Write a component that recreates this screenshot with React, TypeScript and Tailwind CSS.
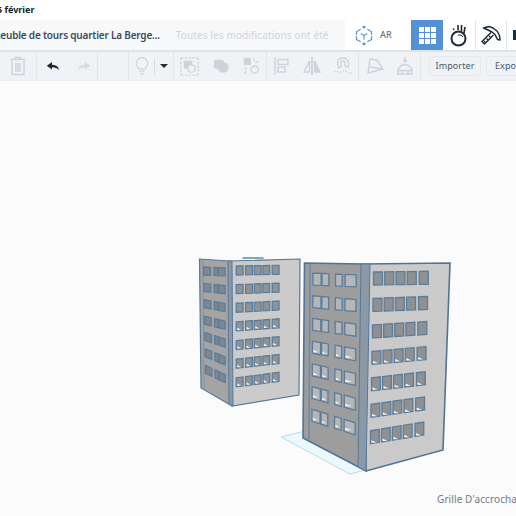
import { ReactNode } from 'react';

type Pt = [number, number];

const lerp = (a: Pt, b: Pt, t: number): Pt => [a[0] + (b[0] - a[0]) * t, a[1] + (b[1] - a[1]) * t];
const pts = (list: Pt[]) => list.map((p) => p.join(',')).join(' ');

// one storey grid of windows: corners of top row window run and bottom row run
function WindowGrid({
  spans,
  topA,
  topB,
  botA,
  botB,
  h,
  rows,
  fill,
  sliver,
}: {
  spans: [number, number][];
  topA: Pt;
  topB: Pt;
  botA: Pt;
  botB: Pt;
  h: number;
  rows: number;
  fill: string;
  sliver?: boolean;
}) {
  const items: ReactNode[] = [];
  for (let r = 0; r < rows; r++) {
    const t = r / (rows - 1);
    const a = lerp(topA, botA, t);
    const b = lerp(topB, botB, t);
    spans.forEach(([s, e], i) => {
      const p1 = lerp(a, b, s);
      const p2 = lerp(a, b, e);
      const quad: Pt[] = [p1, p2, [p2[0], p2[1] + h], [p1[0], p1[1] + h]];
      items.push(<polygon key={`${r}-${i}`} points={pts(quad)} fill={fill} stroke="#5b7d9b" strokeWidth="1.3" />);
      if (sliver && t > 0.4) {
        const sl: Pt[] = [
          [p1[0] + 1, p1[1] + h - 1],
          [p1[0] + 1, p1[1] + h - 3.5],
          [p1[0] + (p2[0] - p1[0]) * 0.7, p1[1] + h - 1],
        ];
        items.push(<polygon key={`s${r}-${i}`} points={pts(sl)} fill="#f1f3f4" />);
      }
    });
  }
  return <>{items}</>;
}

function Buildings() {
  return (
    <svg viewBox="0 81 516 435" className="absolute inset-0 h-full w-full">
      {/* workplane */}
      <polygon points="281,437 305,431 443,450 350,474" fill="#ecf8fc" stroke="#aee0f0" strokeWidth="1" />

      {/* small tower */}
      <polygon points="242,259 243,257 263,257 264,259" fill="#7fa9b3" />
      <polygon points="199.5,259 229,261 232,406 201,388" fill="#a4a4a4" stroke="#56799a" strokeWidth="1.2" />
      <polygon points="229,261 300,259 299,395 232,406" fill="#cbcbcb" stroke="#56799a" strokeWidth="1.2" />
      <polygon points="228,261 232,261 233,406 229,404" fill="#8b98a5" stroke="#56799a" strokeWidth="1" />
      <line x1="203" y1="260" x2="204" y2="388" stroke="#7e93a7" strokeWidth="1" />
      <WindowGrid
        spans={[[0.02, 0.3], [0.44, 0.6], [0.62, 0.88]]}
        topA={[203, 267]}
        topB={[228, 268]}
        botA={[205, 365]}
        botB={[228, 376]}
        h={8}
        rows={7}
        fill="#7f878e"
      />
      <WindowGrid
        spans={[[0.02, 0.13], [0.17, 0.28], [0.31, 0.42], [0.45, 0.56], [0.6, 0.71]]}
        topA={[235, 266]}
        topB={[297, 265]}
        botA={[235, 378]}
        botB={[297, 370]}
        h={9}
        rows={7}
        fill="#8f9396"
        sliver
      />

      {/* big tower */}
      <polygon points="304.5,263 363,264 366,471 303,438" fill="#9d9d9d" stroke="#4f7496" strokeWidth="1.6" />
      <polygon points="363,264 450,263 443,450 366,471" fill="#cacaca" stroke="#4f7496" strokeWidth="1.6" />
      <polygon points="361,264 370,264 366,471 358,467" fill="#8b98a5" stroke="#56799a" strokeWidth="1" />
      <line x1="310" y1="264" x2="309" y2="441" stroke="#6f8aa3" strokeWidth="1.5" />
      <WindowGrid
        spans={[[0.02, 0.19], [0.21, 0.35], [0.49, 0.63], [0.69, 0.92]]}
        topA={[312, 273]}
        topB={[360, 275]}
        botA={[311, 409]}
        botB={[359, 424]}
        h={12}
        rows={7}
        fill="#b4b7b9"
        sliver
      />
      <WindowGrid
        spans={[[0.02, 0.14], [0.17, 0.29], [0.32, 0.44], [0.47, 0.59], [0.63, 0.75]]}
        topA={[372, 272]}
        topB={[447, 271]}
        botA={[369, 431]}
        botB={[442, 419]}
        h={13}
        rows={7}
        fill="#8e9092"
        sliver
      />
    </svg>
  );
}

function Divider() {
  return <div className="h-full w-px shrink-0 bg-[#e3e6ea]" />;
}

function ToolIcon({ w, children }: { w: string; children: ReactNode }) {
  return <div className={`flex h-full shrink-0 items-center justify-center ${w}`}>{children}</div>;
}

const LIGHT = '#ccd3da';

function Glyph({ children }: { children: ReactNode }) {
  return (
    <svg viewBox="0 0 20 20" className="h-5 w-5" fill="none" stroke={LIGHT} strokeWidth="1.4">
      {children}
    </svg>
  );
}

export default function App() {
  return (
    <div
      className="flex h-[516px] w-[516px] flex-col overflow-hidden bg-[#fbfbfc] text-[#2f3d4e]"
      style={{ fontFamily: '"Noto Sans", "Open Sans", sans-serif' }}
    >
      <div className="flex h-5 shrink-0 items-center overflow-hidden bg-white text-[9px] font-bold text-[#16202b]">
        <span className="ml-[-3px]">5 février</span>
      </div>

      <div className="flex h-8 shrink-0 border-b-2 border-[#dfe3e8] bg-white">
        <div className="flex w-[345px] shrink-0 items-center overflow-hidden whitespace-nowrap bg-[#f7f8fa] pr-2">
          <span className="ml-[-22px] text-[10px] font-semibold tracking-[-0.2px] text-[#3c4b5e]">
            Immeuble de tours quartier La Berge...
          </span>
          <span className="ml-4 text-[10px] tracking-[0.12px] text-[#cdd4dc]">Toutes les modifications ont été</span>
        </div>
        <div className="flex w-[66px] shrink-0 items-center pl-[9px]">
          <svg viewBox="0 0 24 24" className="h-[23px] w-5" fill="none" stroke="#5b97dc" strokeWidth="1.5">
            <path d="M10 2.500 12 1l2 1.500M10 21.500 12 23l2-1.500M12 1v3M12 20v3" />
            <path d="M8 4.500 3 7.500v4M16 4.500l5 3v4M3 13v4l5 2.500M21 13v4l-5 2.500" />
            <path d="M12 12 8 9.500M12 12l4-2.500M12 12v5" />
          </svg>
          <span className="ml-[6px] text-[9px] font-medium text-[#6a7583]">AR</span>
        </div>
        <div className="flex w-8 shrink-0 items-center justify-center bg-[#5591d8]">
          <div className="grid h-[17px] w-[17px] grid-cols-3 grid-rows-3 gap-px">
            {Array.from({ length: 9 }).map((_, i) => (
              <div key={i} className="bg-white" />
            ))}
          </div>
        </div>
        <div className="flex w-8 shrink-0 items-center justify-center">
          <svg viewBox="0 0 20 24" className="h-[24px] w-5" fill="none" stroke="#1d2b3a" strokeWidth="2">
            <circle cx="9.500" cy="15.500" r="7" />
            <path d="M5 5.500 4.500 7M9 2v5M12.500 2v6M16 4l-1 6" strokeWidth="1.6" />
            <path d="M9 12a4 3 0 0 1 5 2" strokeWidth="1" />
          </svg>
        </div>
        <Divider />
        <div className="flex w-[30px] shrink-0 items-center justify-center">
          <svg viewBox="0 0 20 20" className="h-5 w-5" fill="none" stroke="#1d2b3a" strokeWidth="1.5" strokeLinejoin="round">
            <path d="M2.500 3 8 1.500l4 1.500 4 3 2.500 4.500.5 4.500-2.500-.5-2.500-5-3-2.500-5-2.500z" />
            <path d="M10 7.500 1 16.500l2.500 2.500 9-9" />
            <path d="M8 11l1.500 1.500M5.500 13.500 7 15M3 16l1.500 1.500" strokeWidth="1.200" />
          </svg>
        </div>
        <Divider />
        <div className="ml-[6px] mt-[10px] h-[10px] w-2 shrink-0 bg-[#1d2b3a]" />
      </div>

      <div className="flex h-[29px] shrink-0 items-center overflow-hidden border-b border-[#eceef1] bg-[#f0f2f5]">
        <ToolIcon w="w-9">
          <Glyph>
            <path d="M4 5v13.500h12V5M2.500 3.500h15M7.500 3.500V1.500h5v2M8 7v9M10 7v9M12 7v9" />
          </Glyph>
        </ToolIcon>
        <Divider />
        <ToolIcon w="w-[32px]">
          <svg viewBox="0 0 20 14" className="h-[11px] w-[15px]">
            <path d="M8 1 1 6l7 5V8c4 0 7 1 9 4 0-5-3-7-9-7.500z" fill="#1f2a36" />
          </svg>
        </ToolIcon>
        <ToolIcon w="w-[28px]">
          <svg viewBox="0 0 20 14" className="h-[11px] w-[15px]">
            <path d="M12 1l7 5-7 5V8C8 8 5 9 3 12c0-5 3-7 9-7.500z" fill="#d5dbe1" />
          </svg>
        </ToolIcon>
        <Divider />
        <div className="w-[30px] shrink-0" />
        <Divider />
        <ToolIcon w="w-[25px]">
          <svg viewBox="0 0 16 22" className="h-[20px] w-[14px]" fill="none" stroke={LIGHT} strokeWidth="1.3">
            <path d="M4.500 14.500C3 12.500 1.500 11 1.500 8a6.500 6.500 0 0 1 13 0c0 3-1.500 4.500-3 6.500zM5 17h6M6 20h4" />
          </svg>
        </ToolIcon>
        <div className="h-[17px] w-px shrink-0 bg-[#d8dde3]" />
        <ToolIcon w="w-[18px]">
          <div className="h-0 w-0 border-x-[4px] border-t-[4px] border-x-transparent border-t-[#1f2a36]" />
        </ToolIcon>
        <Divider />
        <ToolIcon w="w-[31px]">
          <svg viewBox="0 0 20 20" className="h-[19px] w-[19px]" fill="none" stroke={LIGHT} strokeWidth="1.4">
            <path d="M1 1h18M1 19h18M1 1v18M19 1v18" strokeDasharray="2.500 1.500" />
            <rect x="4" y="4" width="9" height="8" fill={LIGHT} stroke="none" />
            <circle cx="12" cy="12" r="4" fill="#f0f2f5" />
          </svg>
        </ToolIcon>
        <ToolIcon w="w-[31px]">
          <svg viewBox="0 0 20 20" className="h-[18px] w-[18px]" fill={LIGHT}>
            <rect x="2" y="3" width="11" height="10" rx="2" />
            <circle cx="12.500" cy="11.500" r="6" />
          </svg>
        </ToolIcon>
        <ToolIcon w="w-[30px]">
          <svg viewBox="0 0 20 20" className="h-[18px] w-[18px]" fill="none" stroke={LIGHT} strokeWidth="1.4">
            <rect x="2" y="1" width="8" height="8" fill={LIGHT} stroke="none" />
            <circle cx="14" cy="14" r="4" />
            <path d="M13 2l1 3M18 5l-3 2M3 12l2 2M2 18l3-2" />
          </svg>
        </ToolIcon>
        <Divider />
        <ToolIcon w="w-[30px]">
          <Glyph>
            <path d="M3 1v18" />
            <rect x="6" y="3.500" width="10" height="5" />
            <rect x="6" y="11" width="7" height="5" />
          </Glyph>
        </ToolIcon>
        <ToolIcon w="w-[30px]">
          <Glyph>
            <path d="M10 1v18" strokeWidth="1.800" />
            <path d="M7.500 5 2 16h5.500z" />
            <path d="M12.500 5 18 16h-5.500z" fill={LIGHT} />
          </Glyph>
        </ToolIcon>
        <ToolIcon w="w-[31px]">
          <Glyph>
            <path d="M6 12C3 7 5 2 10 2s7 5 5 9l-3-1c1-3 0-5-2-5s-3 2-1.500 5z" />
            <path d="M1 16c3-3 4 2 7 0s4-1 6 0 3 1 5 1" strokeDasharray="1.500 1.500" />
          </Glyph>
        </ToolIcon>
        <Divider />
        <ToolIcon w="w-[31px]">
          <Glyph>
            <path d="M5 3l7 1 6 9-15 4z" />
            <path d="M5 11l13 2" />
          </Glyph>
        </ToolIcon>
        <ToolIcon w="w-[30px]">
          <Glyph>
            <path d="M3 18v-5l4-4h6l4 4v5zM3 14.500h14M7 14.500V18M13 14.500V18" />
            <path d="M10 1v5M8 4l2 2 2-2" />
          </Glyph>
        </ToolIcon>
        <Divider />
        <div className="ml-2 flex h-5 w-[52px] shrink-0 items-center justify-center rounded-sm border border-[#e6e9ed] text-[9px] tracking-[0.1px] text-[#4c5a6a]">
          Importer
        </div>
        <div className="ml-[5px] flex h-5 w-[52px] shrink-0 items-center rounded-sm border border-[#e6e9ed] pl-2 text-[9px] tracking-[0.1px] text-[#4c5a6a]">
          Exporter
        </div>
      </div>

      <div className="relative flex-1">
        <Buildings />
        <div className="absolute left-[437px] top-[411px] whitespace-nowrap text-[10px] tracking-[0.1px] text-[#6f7b88]">
          Grille D'accrochage
        </div>
      </div>
    </div>
  );
}
